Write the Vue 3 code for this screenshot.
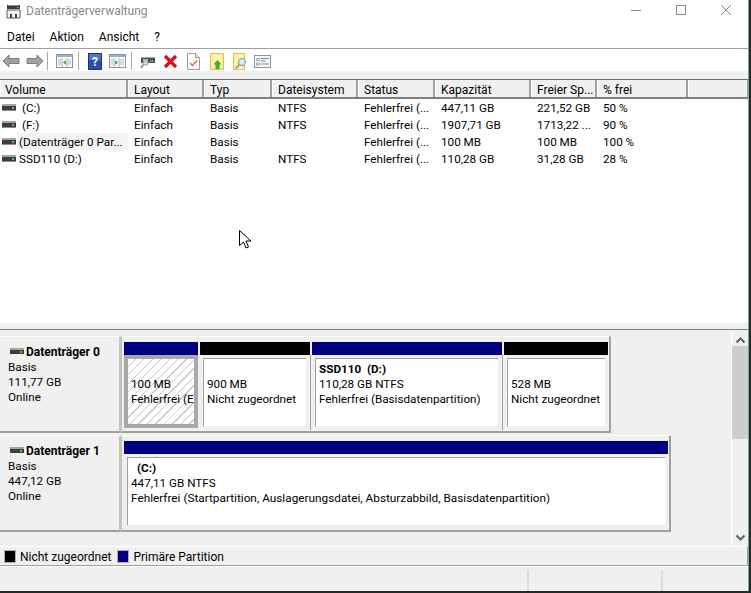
<script setup>
const columns = [
  { label: 'Volume', width: 128 },
  { label: 'Layout', width: 76 },
  { label: 'Typ', width: 68 },
  { label: 'Dateisystem', width: 86 },
  { label: 'Status', width: 77 },
  { label: 'Kapazität', width: 96 },
  { label: 'Freier Sp...', width: 66 },
  { label: '% frei', width: 91 }
]
const rows = [
  { vol: ' (C:)', fs: 'NTFS', cap: '447,11 GB', free: '221,52 GB', pct: '50 %' },
  { vol: ' (F:)', fs: 'NTFS', cap: '1907,71 GB', free: '1713,22 ...', pct: '90 %' },
  { vol: '(Datenträger 0 Par...', fs: '', cap: '100 MB', free: '100 MB', pct: '100 %', hl: true },
  { vol: 'SSD110 (D:)', fs: 'NTFS', cap: '110,28 GB', free: '31,28 GB', pct: '28 %' }
]
const disk0 = [
  { w: 75, color: '#000080', lines: ['100 MB', 'Fehlerfrei (E'], selected: true },
  { w: 111, color: '#000000', lines: ['900 MB', 'Nicht zugeordnet'] },
  { w: 191, color: '#000080', name: 'SSD110  (D:)', lines: ['110,28 GB NTFS', 'Fehlerfrei (Basisdatenpartition)'] },
  { w: 105, color: '#000000', lines: ['528 MB', 'Nicht zugeordnet'] }
]
</script>

<template>
  <div class="window">
    <div class="titlebar">
      <svg class="app-icon" width="16" height="16" viewBox="0 0 16 16">
        <rect x="2" y="2" width="13" height="4" fill="#3c3c3c" />
        <rect x="3" y="2" width="11" height="1" fill="#8a8a8a" />
        <rect x="12" y="4" width="2" height="1" fill="#35c63a" />
        <path d="M2 7h13v8H2z" fill="#f4f4f4" stroke="#555" stroke-width="1" />
        <rect x="5" y="11" width="2" height="4" fill="#444" />
        <rect x="10" y="11" width="2" height="4" fill="#444" />
      </svg>
      <span class="title">Datenträgerverwaltung</span>
      <div class="win-buttons">
        <svg width="12" height="12" viewBox="0 0 12 12"><path d="M1 6.500h10" stroke="#8c8c8c" /></svg>
        <svg width="12" height="12" viewBox="0 0 12 12"><rect x="1.500" y="1.500" width="9" height="9" fill="none" stroke="#8c8c8c" /></svg>
        <svg width="12" height="12" viewBox="0 0 12 12"><path d="M1 1l10 10M11 1L1 11" stroke="#8c8c8c" /></svg>
      </div>
    </div>

    <nav class="menubar">
      <span>Datei</span><span>Aktion</span><span>Ansicht</span><span>?</span>
    </nav>

    <div class="toolbar">
      <div class="tool">
        <svg width="19" height="14" viewBox="0 0 19 14"><path d="M1 7l6-6v3.500h10v5H7V13z" fill="#a2a2a2" stroke="#7d7d7d" /></svg>
      </div>
      <div class="tool">
        <svg width="19" height="14" viewBox="0 0 19 14"><path d="M18 7l-6-6v3.500H2v5h10V13z" fill="#a2a2a2" stroke="#7d7d7d" /></svg>
      </div>
      <i class="sep first"></i>
      <div class="tool">
        <svg width="17" height="14" viewBox="0 0 17 14">
          <rect x=".5" y=".5" width="16" height="13" fill="#f7f9fb" stroke="#8a949c" />
          <rect x="1" y="1" width="15" height="2" fill="#9fb1bd" />
          <path d="M6 4v9M11 4v9" stroke="#a8b4bc" />
          <path d="M10 6v5L7 8.500z" fill="#3fb53f" />
          <path d="M2 6h3M2 8h3M2 10h3M12 6h3M12 8h3M12 10h3" stroke="#a9bfd0" />
        </svg>
      </div>
      <i class="sep"></i>
      <div class="tool">
        <svg width="14" height="17" viewBox="0 0 14 17">
          <rect x=".5" y=".5" width="13" height="16" fill="#2c4fa8" stroke="#1c3480" />
          <rect x="1" y="1" width="12" height="6" fill="#5073c8" />
          <text x="7" y="13" class="help-glyph" text-anchor="middle">?</text>
        </svg>
      </div>
      <div class="tool">
        <svg width="17" height="14" viewBox="0 0 17 14">
          <rect x=".5" y=".5" width="16" height="13" fill="#f7f9fb" stroke="#8a949c" />
          <rect x="1" y="1" width="15" height="2" fill="#9fb1bd" />
          <path d="M5 4v9M10 4v9" stroke="#a8b4bc" />
          <path d="M6 6v5l3-2.500z" fill="#3fb53f" />
          <path d="M2 6h2M2 8h2M2 10h2M11 6h4M11 8h4M11 10h4" stroke="#a9bfd0" />
        </svg>
      </div>
      <i class="sep"></i>
      <div class="tool">
        <svg width="16" height="15" viewBox="0 0 16 15">
          <path d="M1 4h14v5H1z" fill="#4a4f52" />
          <path d="M1 3.500h14" stroke="#a9b1b5" />
          <rect x="3" y="5" width="5" height="3" fill="#c9d6dd" />
          <rect x="10" y="6" width="1" height="2" fill="#6fe04f" />
          <rect x="12" y="6" width="1" height="2" fill="#6fe04f" />
          <circle cx="5.500" cy="8.500" r="2.700" fill="#d9e8f0" fill-opacity=".7" stroke="#7f8c94" />
          <path d="M3.500 10.500L1 14" stroke="#8a8a8a" stroke-width="1.500" />
        </svg>
      </div>
      <div class="tool">
        <svg width="15" height="15" viewBox="0 0 15 15"><path d="M2 2l11 11M13 2L2 13" stroke="#d8121c" stroke-width="3.400" /></svg>
      </div>
      <div class="tool">
        <svg width="13" height="17" viewBox="0 0 13 17">
          <path d="M.5.500h8l4 4v12H.5z" fill="#fdfdfd" stroke="#9a9a9a" />
          <path d="M8.500.500v4h4" fill="#e8e8e8" stroke="#9a9a9a" />
          <path d="M3 10l2.500 2.500L10 7.500" fill="none" stroke="#e8692f" stroke-width="1.300" />
        </svg>
      </div>
      <div class="tool">
        <svg width="14" height="17" viewBox="0 0 14 17">
          <path d="M.5.500h13v16H.5z" fill="#fdf3a8" stroke="#e0bd4a" />
          <path d="M7.500 7l4 4.500H9.500V16h-4v-4.500h-2z" fill="#33b233" />
        </svg>
      </div>
      <div class="tool">
        <svg width="14" height="17" viewBox="0 0 14 17">
          <path d="M.5.500h11v16H.5z" fill="#fdf3a8" stroke="#e0bd4a" />
          <circle cx="9" cy="9" r="3.500" fill="#d9ecf7" stroke="#7f8f9c" />
          <path d="M6.500 11.500L2.500 15.500" stroke="#8a8a8a" stroke-width="1.600" />
        </svg>
      </div>
      <div class="tool">
        <svg width="17" height="13" viewBox="0 0 17 13">
          <rect x=".5" y=".5" width="16" height="12" fill="#f8fafb" stroke="#8a949c" />
          <path d="M2.500 3.500h3v2h-3zM2.500 8h3v2h-3z" fill="#fff" stroke="#6b8db5" stroke-width=".8" />
          <path d="M7 3.500h8M7 6h5M7 9h8" stroke="#7e8a92" />
        </svg>
      </div>
    </div>
    <div class="band"></div>

    <section class="list">
      <div class="list-head">
        <div v-for="c in columns" :key="c.label" class="hcell" :style="{ width: c.width + 'px' }">{{ c.label }}</div>
        <div class="hcell fill"></div>
      </div>
      <div v-for="r in rows" :key="r.vol" class="row">
        <div class="cell vol">
          <svg class="drive" width="14" height="7" viewBox="0 0 14 7">
            <rect y="0" width="14" height="2" fill="#a4a4a4" />
            <rect y="2" width="14" height="4" fill="#3d3d3d" />
            <rect y="6" width="14" height="1" fill="#8c8c8c" />
            <rect x="10" y="3" width="2" height="2" fill="#3ed43e" />
          </svg>
          <span class="vol-text" :class="{ hl: r.hl }">{{ r.vol }}</span>
        </div>
        <div class="cell c-layout">Einfach</div>
        <div class="cell c-typ">Basis</div>
        <div class="cell c-fs">{{ r.fs }}</div>
        <div class="cell c-status">Fehlerfrei (...</div>
        <div class="cell c-cap">{{ r.cap }}</div>
        <div class="cell c-free">{{ r.free }}</div>
        <div class="cell c-pct">{{ r.pct }}</div>
      </div>
    </section>

    <div class="splitter"></div>

    <section class="lower">
      <div class="disks">
        <div class="disk disk0">
          <div class="disk-label">
            <div class="disk-name">
              <svg width="14" height="7" viewBox="0 0 14 7">
                <rect y="0" width="14" height="2" fill="#a4a4a4" />
                <rect y="2" width="14" height="4" fill="#3d3d3d" />
                <rect x="10" y="3" width="2" height="2" fill="#3ed43e" />
              </svg>
              <b>Datenträger 0</b>
            </div>
            <div>Basis</div><div>111,77 GB</div><div>Online</div>
          </div>
          <div class="parts">
            <div v-for="p in disk0" :key="p.lines[0]" class="part" :style="{ width: p.w + 'px' }">
              <div class="bar" :style="{ background: p.color }"></div>
              <div class="part-body" :class="{ selected: p.selected }">
                <div class="part-inner">
                  <b class="part-name">{{ p.name || '&nbsp;' }}</b>
                  <div v-for="l in p.lines" :key="l" class="part-line">{{ l }}</div>
                </div>
              </div>
            </div>
          </div>
        </div>

        <div class="disk disk1">
          <div class="disk-label">
            <div class="disk-name">
              <svg width="14" height="7" viewBox="0 0 14 7">
                <rect y="0" width="14" height="2" fill="#a4a4a4" />
                <rect y="2" width="14" height="4" fill="#3d3d3d" />
                <rect x="10" y="3" width="2" height="2" fill="#3ed43e" />
              </svg>
              <b>Datenträger 1</b>
            </div>
            <div>Basis</div><div>447,12 GB</div><div>Online</div>
          </div>
          <div class="parts">
            <div class="part" style="width: 545px">
              <div class="bar" style="background: #000080"></div>
              <div class="part-body">
                <div class="part-inner">
                  <b class="part-name indent">(C:)</b>
                  <div class="part-line">447,11 GB NTFS</div>
                  <div class="part-line wide">Fehlerfrei (Startpartition, Auslagerungsdatei, Absturzabbild, Basisdatenpartition)</div>
                </div>
              </div>
            </div>
          </div>
        </div>
      </div>

      <div class="scrollbar">
        <svg width="11" height="7" viewBox="0 0 11 7"><path d="M1.500 5.500l4-4 4 4" fill="none" stroke="#606060" stroke-width="2" /></svg>
        <div class="thumb"></div>
        <div class="track"></div>
        <svg width="11" height="7" viewBox="0 0 11 7"><path d="M1.500 1.500l4 4 4-4" fill="none" stroke="#606060" stroke-width="2" /></svg>
      </div>
    </section>

    <footer class="legend">
      <i class="swatch black"></i><span>Nicht zugeordnet</span>
      <i class="swatch blue"></i><span>Primäre Partition</span>
    </footer>

    <div class="status">
      <div class="st main"></div>
      <div class="st mid"></div>
      <div class="st end"></div>
    </div>

    <svg class="cursor" width="13" height="20" viewBox="0 0 13 20">
      <path d="M.5.500v15l4-3.500 2.500 6 2.500-1-2.500-6h5z" fill="#fff" stroke="#000" />
    </svg>
  </div>
</template>

<style scoped>
.window {
  position: relative;
  width: 748px;
  height: 591px;
  border-right: 1px solid #9a9a9a;
  background: #fff;
  display: flex;
  flex-direction: column;
  overflow: hidden;
  font: 11.7px/15px Roboto, "Open Sans", sans-serif;
  color: #000;
}
.titlebar {
  height: 22px;
  display: flex;
  align-items: center;
  flex: none;
}
.app-icon { margin: 0 5px; }
.title { color: #8a8a8a; font-size: 12px; }
.win-buttons {
  margin-left: auto;
  display: flex;
  gap: 33px;
  padding-right: 16px;
  margin-top: -2px;
}
.menubar {
  height: 27px;
  flex: none;
  box-sizing: border-box;
  display: flex;
  gap: 15px;
  align-items: center;
  padding: 4px 0 0 7px;
  border-bottom: 1px solid #a0a0a0;
  font-size: 12px;
}
.toolbar {
  height: 22px;
  flex: none;
  box-sizing: border-box;
  padding-top: 2px;
  display: flex;
  align-items: center;
}
.tool {
  width: 23px;
  height: 20px;
  display: flex;
  align-items: center;
  justify-content: center;
}
.sep {
  width: 1px;
  height: 18px;
  background: #a8a8a8;
  margin: 0 4px 0 2px;
}
.sep.first { margin: 0 5px 0 1px; }
.help-glyph { font: bold 12px Roboto, sans-serif; fill: #fff; }
.band { height: 8px; flex: none; background: #f0f0f0; }

.list {
  height: 244px;
  flex: none;
  background: #fff;
}
.list-head {
  display: flex;
  height: 17px;
  border-top: 1px solid #696969;
  border-bottom: 2px solid #808080;
  background: #f0f0f0;
  font-size: 12px;
}
.hcell {
  flex: none;
  box-sizing: border-box;
  padding-left: 5px;
  border-right: 2px solid #a0a0a0;
  border-left: 1px solid #fff;
  white-space: nowrap;
  overflow: hidden;
  line-height: 21px;
}
.hcell:first-child { padding-left: 4px; }
.hcell.fill { flex: 1; border-right: 1px solid #a0a0a0; }
.row {
  display: flex;
  height: 17px;
  line-height: 19px;
  white-space: nowrap;
}
.cell { flex: none; overflow: hidden; box-sizing: border-box; padding-left: 6px; height: 17px; }
.vol {
  width: 128px;
  padding-left: 2px;
  display: flex;
  align-items: center;
}
.drive { flex: none; }
.vol-text {
  white-space: pre;
  padding-left: 2px;
  margin-left: 1px;
  height: 17px;
  flex: 1;
  min-width: 0;
}
.vol-text.hl { background: #f3f3f3; }
.c-layout { width: 76px; }
.c-typ { width: 68px; }
.c-fs { width: 86px; }
.c-status { width: 77px; }
.c-cap { width: 96px; }
.c-free { width: 66px; }
.c-pct { width: 91px; }

.splitter {
  height: 7px;
  flex: none;
  background: #f0f0f0;
  border-bottom: 1px solid #808080;
  box-sizing: border-box;
}

.lower {
  height: 216px;
  flex: none;
  display: flex;
  background: #f0f0f0;
}
.disks { flex: 1; padding-top: 6px; min-width: 0; }
.disk { display: flex; }
.disk0 { height: 99px; }
.disk1 { height: 98px; }
.disk-label {
  width: 121px;
  height: 97px;
  flex: none;
  box-sizing: border-box;
  border-top: 1px solid #fff;
  border-right: 2px solid #c4c4c4;
  border-bottom: 2px solid #a0a0a0;
  padding: 8px 0 0 8px;
  background: #f0f0f0;
}
.disk-name { display: flex; align-items: center; gap: 2px; padding-left: 2px; font-size: 12px; }
.disk-name svg { margin-top: -2px; }
.disk-name b { font-weight: 700; }
.parts {
  display: flex;
  gap: 1px;
  align-items: stretch;
  height: 97px;
  box-sizing: border-box;
  padding: 5px 0 0 2px;
  border-top: 1px solid #fff;
  border-left: 1px solid #c4c4c4;
  border-right: 2px solid #a0a0a0;
  border-bottom: 2px solid #a0a0a0;
}
.part { display: flex; flex-direction: column; flex: none; }
.bar { height: 13px; flex: none; margin-right: 1px; }
.part-body {
  height: 75px;
  box-sizing: border-box;
  padding: 3px 4px 4px 3px;
  border-right: 1px solid #a0a0a0;
  overflow: hidden;
}
.part:last-child .part-body { border-right: 0; }
.part-inner {
  height: 68px;
  background: #fff;
  border-top: 1px solid #a0a0a0;
  border-left: 1px solid #a0a0a0;
  padding: 3px 0 0 3px;
  overflow: hidden;
  white-space: nowrap;
  box-sizing: border-box;
}
.part-name { display: block; height: 15px; font-weight: 700; white-space: pre; }
.part-name.indent { padding-left: 6px; }
.part-line { white-space: nowrap; }
.part-line.wide { font-size: 11.8px; }
.part-body.selected {
  padding: 0;
  border: 4px solid #a8a8a8;
  height: 73px;
  margin-right: 1px;
}
.part-body.selected .part-inner {
  height: 100%;
  border: 0;
  padding: 3px 0 0 3px;
  background: repeating-linear-gradient(135deg, #fff 0 5px, #c8c8c8 5px 6px);
}

.scrollbar {
  width: 17px;
  flex: none;
  border-left: 1px solid #fff;
  margin-top: 2px;
  display: flex;
  flex-direction: column;
  align-items: center;
  padding-top: 5px;
  box-sizing: border-box;
}
.thumb { width: 16px; height: 93px; background: #cdcdcd; margin-top: 2px; }
.track { flex: 1; }
.scrollbar svg:last-child { margin-bottom: 5px; }

.legend {
  height: 20px;
  flex: none;
  display: flex;
  align-items: center;
  padding-left: 5px;
  background: #f0f0f0;
  border-top: 1px solid #fff;
  border-bottom: 1px solid #a0a0a0;
  border-right: 1px solid #a0a0a0;
  box-sizing: border-box;
  font-size: 12px;
}
.legend span { margin-left: 5px; margin-right: 7px; padding-top: 2px; }
.swatch { width: 10px; height: 11px; display: block; outline: 1px solid #b0b0b0; }
.black { background: #000; }
.blue { background: #000080; }

.status {
  flex: 1;
  display: flex;
  background: #f0f0f0;
  border-top: 1px solid #fff;
  padding-top: 3px;
}
.st { border-right: 2px solid #dcdcdc; }
.main { width: 527px; }
.mid { width: 132px; }
.end { flex: 1; border: 0; }
.cursor { position: absolute; left: 239px; top: 230px; }
</style>

<style>
html, body { margin: 0; background: #1f2d27; overflow: hidden; }
</style>
